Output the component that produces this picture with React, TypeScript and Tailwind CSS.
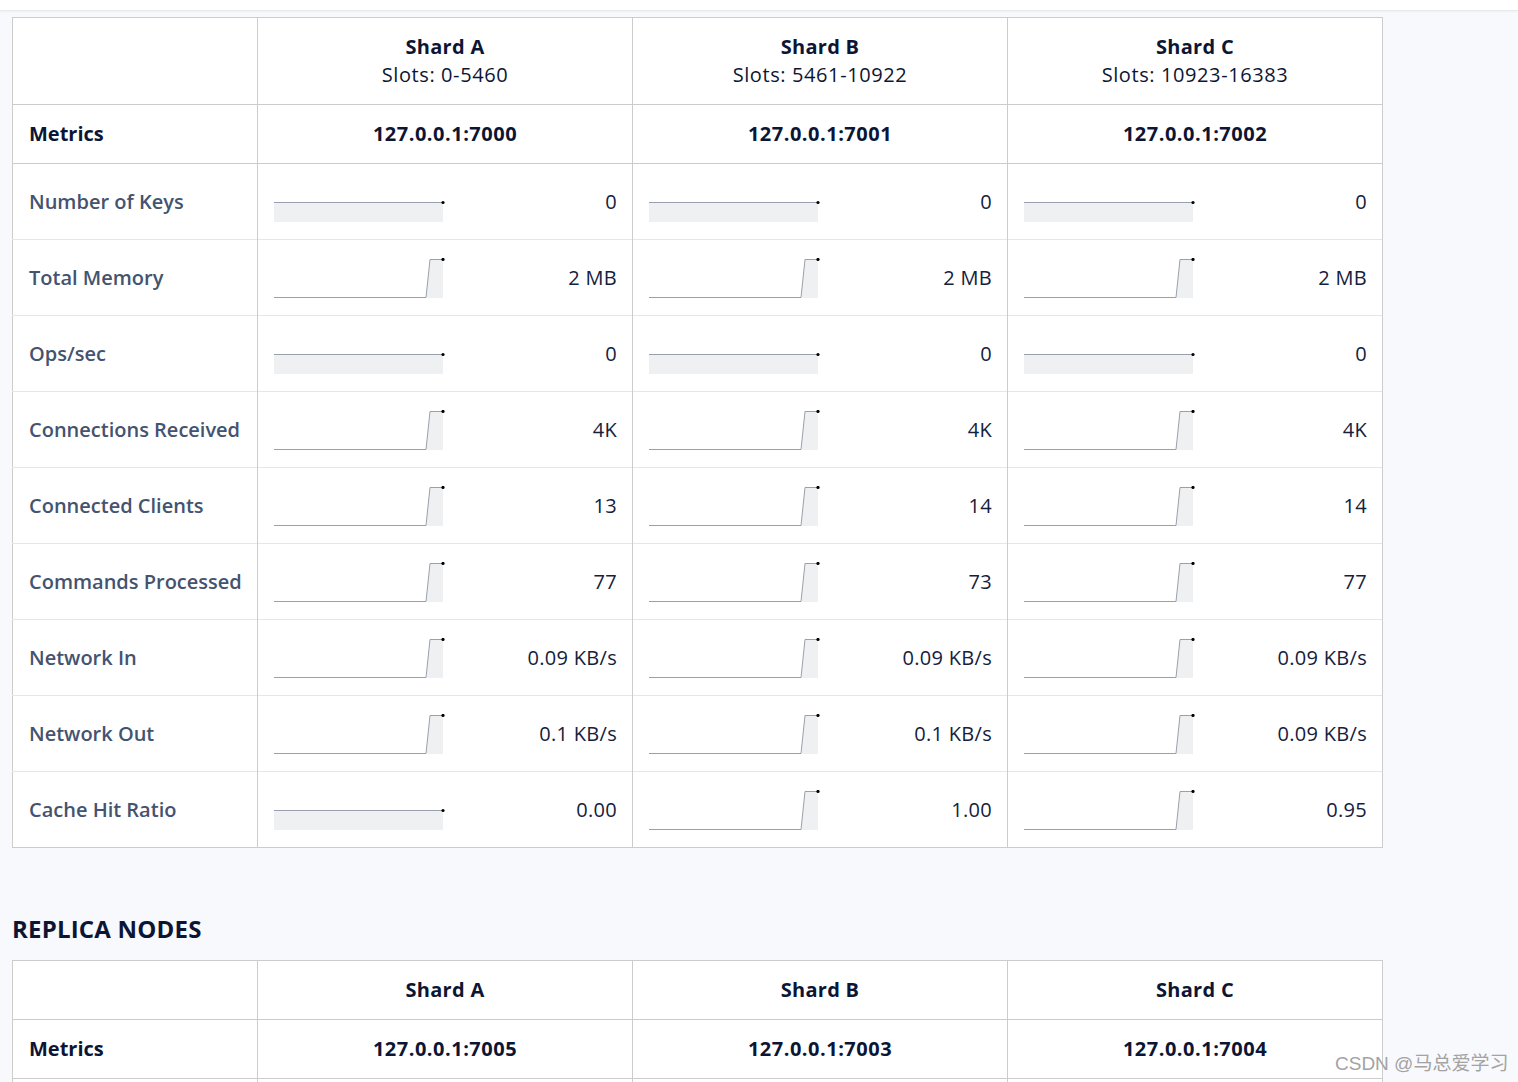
import React from "react";

type Cell = { kind: "flat" | "step"; value: string };
type Row = { label: string; cells: Cell[] };

const F = (v: string): Cell => ({ kind: "flat", value: v });
const S = (v: string): Cell => ({ kind: "step", value: v });

const rows: Row[] = [
  { label: "Number of Keys", cells: [F("0"), F("0"), F("0")] },
  { label: "Total Memory", cells: [S("2 MB"), S("2 MB"), S("2 MB")] },
  { label: "Ops/sec", cells: [F("0"), F("0"), F("0")] },
  { label: "Connections Received", cells: [S("4K"), S("4K"), S("4K")] },
  { label: "Connected Clients", cells: [S("13"), S("14"), S("14")] },
  { label: "Commands Processed", cells: [S("77"), S("73"), S("77")] },
  { label: "Network In", cells: [S("0.09 KB/s"), S("0.09 KB/s"), S("0.09 KB/s")] },
  { label: "Network Out", cells: [S("0.1 KB/s"), S("0.1 KB/s"), S("0.09 KB/s")] },
  { label: "Cache Hit Ratio", cells: [F("0.00"), S("1.00"), S("0.95")] },
];

function Spark({ kind }: { kind: "flat" | "step" }) {
  if (kind === "flat") {
    return (
      <svg width="172" height="40" viewBox="0 0 172 40" className="block">
        <rect x="0" y="20" width="169" height="20" fill="#eff0f2" />
        <line x1="0" y1="20.5" x2="169" y2="20.5" stroke="#98a0ad" strokeWidth="1" />
        <circle cx="169" cy="20.5" r="1.6" fill="#000" />
      </svg>
    );
  }
  return (
    <svg width="172" height="40" viewBox="0 0 172 40" className="block">
      <polygon points="152,40 156,1 169,1 169,40" fill="#eff0f2" />
      <polyline
        points="0,39.5 152,39.5 156,1.5 169,1.5"
        fill="none"
        stroke="#98a0ad"
        strokeWidth="1"
      />
      <circle cx="169" cy="1.5" r="1.6" fill="#000" />
    </svg>
  );
}

const font = { fontFamily: "'Open Sans', 'Noto Sans', sans-serif" };

function PrimaryTable() {
  const shards = [
    { name: "Shard A", slots: "Slots: 0-5460", ip: "127.0.0.1:7000" },
    { name: "Shard B", slots: "Slots: 5461-10922", ip: "127.0.0.1:7001" },
    { name: "Shard C", slots: "Slots: 10923-16383", ip: "127.0.0.1:7002" },
  ];
  return (
    <table className="w-[1370px] border-collapse bg-white border border-[#cccccc] table-fixed">
      <colgroup>
        <col className="w-[245px]" />
        <col className="w-[375px]" />
        <col className="w-[375px]" />
        <col className="w-[375px]" />
      </colgroup>
      <tbody>
        <tr className="h-[87px] border-b border-[#cccccc]">
          <td className="border-r border-[#cccccc]" />
          {shards.map((s) => (
            <td key={s.name} className="border-r border-[#cccccc] text-center text-[#0c1634] text-[20px] leading-[28px]">
              <div className="font-bold tracking-[0.3px]">{s.name}</div>
              <div className="tracking-[0.6px]">{s.slots}</div>
            </td>
          ))}
        </tr>
        <tr className="h-[59px] border-b border-[#cccccc]">
          <td className="border-r border-[#cccccc] pl-4 font-bold text-[20px] text-[#0c1634]">Metrics</td>
          {shards.map((s) => (
            <td key={s.ip} className="border-r border-[#cccccc] text-center font-bold text-[20px] tracking-[0.5px] text-[#0c1634]">
              {s.ip}
            </td>
          ))}
        </tr>
        {rows.map((r, i) => (
          <tr key={r.label} className={"h-[76px] " + (i < rows.length - 1 ? "border-b border-[#e6e6e6]" : "")}>
            <td className="border-r border-[#cccccc] pl-4 font-semibold text-[20px] text-[#44536f] whitespace-nowrap">
              {r.label}
            </td>
            {r.cells.map((c, j) => (
              <td key={j} className="border-r border-[#cccccc] pl-4 pr-[15px]">
                <div className="flex items-center justify-between">
                  <Spark kind={c.kind} />
                  <span className="text-[20px] tracking-[0.3px] text-[#14213d]">{c.value}</span>
                </div>
              </td>
            ))}
          </tr>
        ))}
      </tbody>
    </table>
  );
}

function ReplicaTable() {
  const shards = [
    { name: "Shard A", ip: "127.0.0.1:7005" },
    { name: "Shard B", ip: "127.0.0.1:7003" },
    { name: "Shard C", ip: "127.0.0.1:7004" },
  ];
  return (
    <table className="w-[1370px] border-collapse bg-white border border-[#cccccc] table-fixed">
      <colgroup>
        <col className="w-[245px]" />
        <col className="w-[375px]" />
        <col className="w-[375px]" />
        <col className="w-[375px]" />
      </colgroup>
      <tbody>
        <tr className="h-[59px] border-b border-[#cccccc]">
          <td className="border-r border-[#cccccc]" />
          {shards.map((s) => (
            <td key={s.name} className="border-r border-[#cccccc] text-center font-bold text-[20px] tracking-[0.3px] text-[#0c1634]">
              {s.name}
            </td>
          ))}
        </tr>
        <tr className="h-[59px] border-b border-[#cccccc]">
          <td className="border-r border-[#cccccc] pl-4 font-bold text-[20px] text-[#0c1634]">Metrics</td>
          {shards.map((s) => (
            <td key={s.ip} className="border-r border-[#cccccc] text-center font-bold text-[20px] tracking-[0.5px] text-[#0c1634]">
              {s.ip}
            </td>
          ))}
        </tr>
        <tr className="h-[59px]">
          <td className="border-r border-[#cccccc]" />
          <td className="border-r border-[#cccccc]" />
          <td className="border-r border-[#cccccc]" />
          <td className="border-r border-[#cccccc]" />
        </tr>
      </tbody>
    </table>
  );
}

export default function App() {
  return (
    <div className="relative min-h-[1082px] h-[1082px] overflow-hidden bg-[#f8f9fd]" style={font}>
      <div className="h-[11px] bg-white border-b border-[#e8e9ed] shadow-[0_1px_2px_rgba(0,0,0,0.04)]" />
      <div className="pl-3 pt-[6px]">
        <PrimaryTable />
        <h2 className="mt-[66px] mb-[16px] text-[24px] font-bold text-[#0c1634] leading-[30px] tracking-[0.2px]">REPLICA NODES</h2>
        <ReplicaTable />
      </div>
      <div
        className="absolute left-[1335px] top-[1050px] text-[19px] text-[#a3a3a3] whitespace-nowrap"
        style={{ fontFamily: "'Liberation Sans', 'Noto Sans CJK SC', sans-serif" }}
      >
        CSDN @马总爱学习
      </div>
    </div>
  );
}
